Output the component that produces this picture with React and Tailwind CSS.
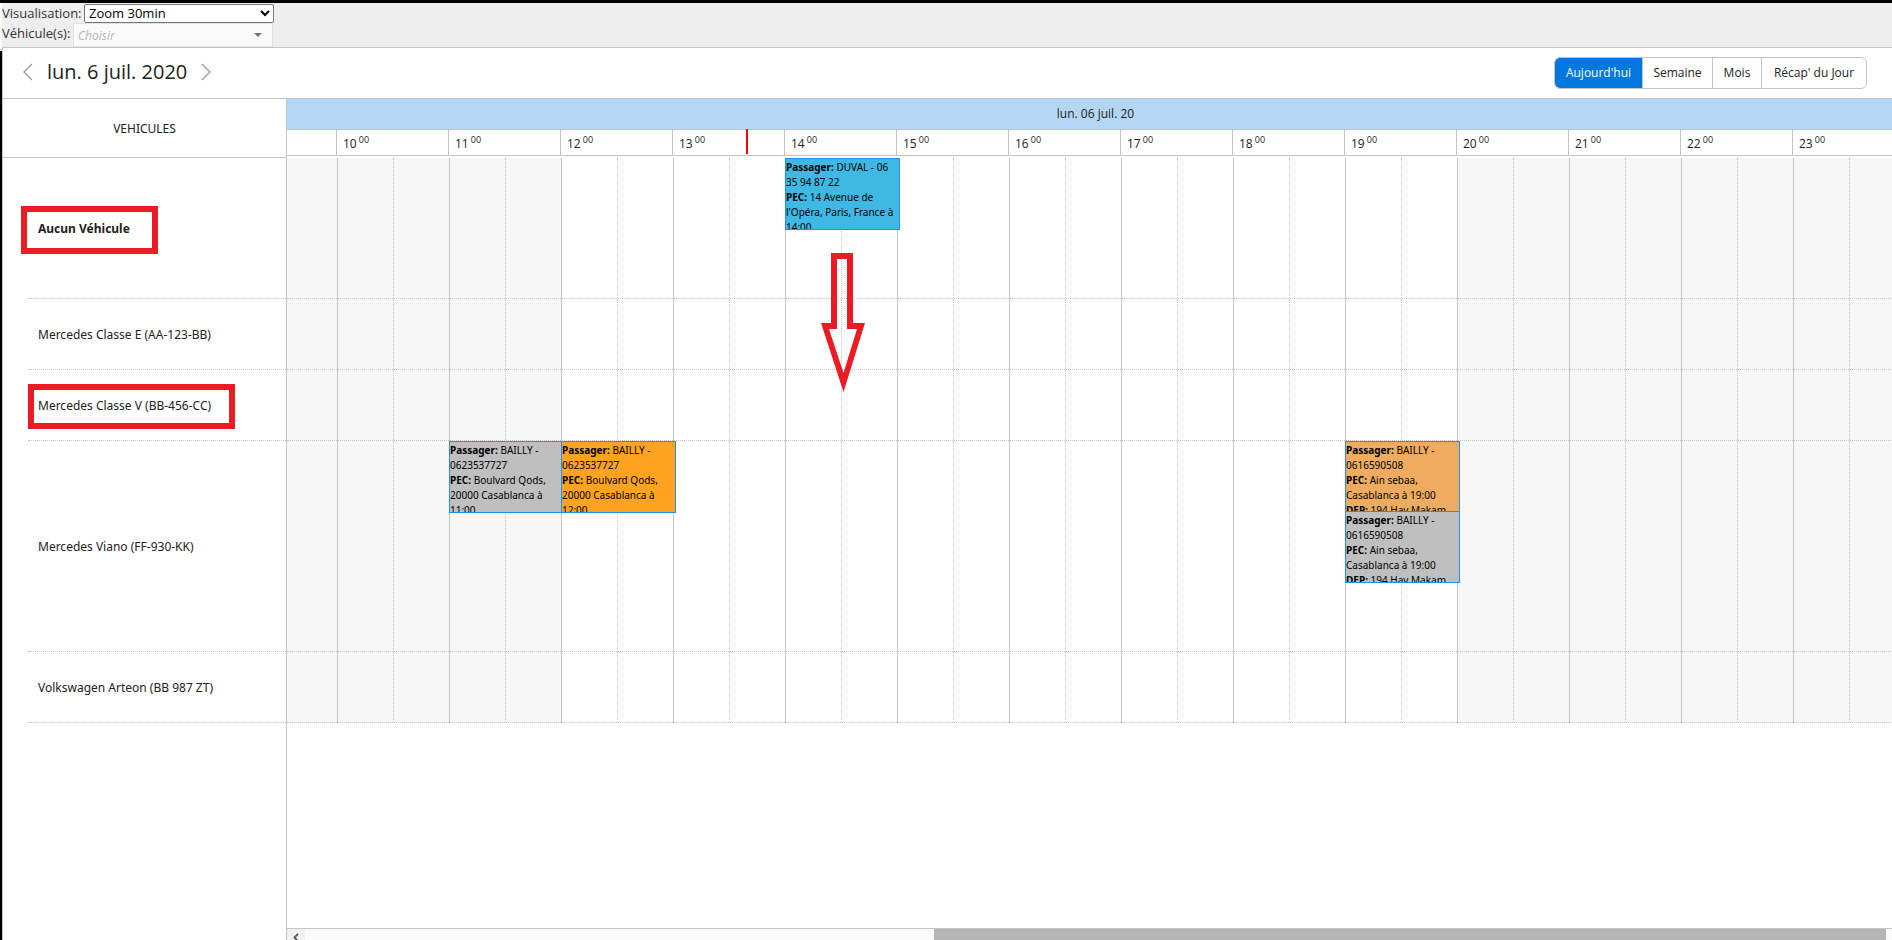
import React from "react";

const HOURS = [10, 11, 12, 13, 14, 15, 16, 17, 18, 19, 20, 21, 22, 23];
const HOUR_WIDTH = 112;
const FIRST_HOUR_X = 50;

const isClosed = (hour) => hour < 12 || hour >= 20;

const VEHICLES = [
  {
    name: "Aucun Véhicule",
    height: "h-[141px]",
    nameClass: "font-bold",
    frame: "left-[18px] top-12 w-[137px] h-12",
    events: [
      {
        hour: 14,
        top: 0,
        color: "bg-[#3fb8e4]",
        passenger: "DUVAL - 06 35 94 87 22",
        pickup: "14 Avenue de l'Opéra, Paris, France à 14:00",
      },
    ],
  },
  { name: "Mercedes Classe E (AA-123-BB)", height: "h-[71px]", events: [] },
  {
    name: "Mercedes Classe V (BB-456-CC)",
    height: "h-[71px]",
    frame: "left-[25px] top-[14px] w-[207px] h-[45px]",
    events: [],
  },
  {
    name: "Mercedes Viano (FF-930-KK)",
    height: "h-[211px]",
    events: [
      {
        hour: 11,
        top: 0,
        color: "bg-[#bfbfbf]",
        passenger: "BAILLY - 0623537727",
        pickup: "Boulvard Qods, 20000 Casablanca à 11:00",
      },
      {
        hour: 12,
        top: 0,
        color: "bg-[#ffa321]",
        passenger: "BAILLY - 0623537727",
        pickup: "Boulvard Qods, 20000 Casablanca à 12:00",
      },
      {
        hour: 19,
        top: 0,
        color: "bg-[#efac5e]",
        passenger: "BAILLY - 0616590508",
        pickup: "Ain sebaa, Casablanca à 19:00",
        dropoff: "194 Hay Makam",
      },
      {
        hour: 19,
        top: 70,
        color: "bg-[#bfbfbf]",
        passenger: "BAILLY - 0616590508",
        pickup: "Ain sebaa, Casablanca à 19:00",
        dropoff: "194 Hay Makam",
      },
    ],
  },
  { name: "Volkswagen Arteon (BB 987 ZT)", height: "h-[71px]", events: [] },
];

function Chevron({ direction }) {
  return (
    <svg width="10" height="18" viewBox="0 0 10 18" fill="none" stroke="#999" strokeWidth="1.2">
      <path d={direction === "left" ? "M9 1L1 9l8 8" : "M1 1l8 8-8 8"} />
    </svg>
  );
}

function Filters() {
  return (
    <div className="ml-0.5 h-11 shrink-0 bg-[#eee] text-[13px] text-[#333]">
      <div className="flex h-5 items-center gap-1">
        <label htmlFor="zoom" className="w-[78px] whitespace-nowrap leading-5">Visualisation:</label>
        <div className="relative">
          <select
            id="zoom"
            className="block h-[19px] w-[190px] appearance-none rounded-xs border border-[#767676] bg-white pl-1 text-[13px] leading-4 text-black"
          >
            <option>Zoom 30min</option>
          </select>
          <svg className="pointer-events-none absolute right-1 top-1.5" width="10" height="7" viewBox="0 0 10 7" fill="none" stroke="#000" strokeWidth="2">
            <path d="M1 1l4 4 4-4" />
          </svg>
        </div>
      </div>
      <div className="flex h-6 items-start">
        <label htmlFor="vehicles" className="w-[71px] whitespace-nowrap leading-5">Véhicule(s):</label>
        <div className="flex h-6 w-[200px] items-center border border-[#e2e2e2] bg-[#fafafa]">
          <input
            id="vehicles"
            placeholder="Choisir"
            className="w-0 flex-1 bg-transparent pl-1 pt-0.5 text-[12px] italic outline-none placeholder:text-[#b5b5b5]"
          />
          <button aria-label="Ouvrir la liste" className="mr-2.5">
            <svg width="8" height="4" viewBox="0 0 8 4" fill="#777">
              <path d="M0 0h8L4 4z" />
            </svg>
          </button>
        </div>
      </div>
    </div>
  );
}

function Toolbar() {
  return (
    <div className="flex h-[51px] shrink-0 items-center justify-between border-b border-[#c4c4c4] pl-5 pr-[25px]">
      <div className="flex items-center gap-3.5 pb-0.5">
        <button aria-label="Jour précédent"><Chevron direction="left" /></button>
        <h1 className="w-[140px] whitespace-nowrap text-center text-[20px] leading-6 text-[#222]">lun. 6 juil. 2020</h1>
        <button aria-label="Jour suivant"><Chevron direction="right" /></button>
      </div>
      <div className="flex h-8 divide-x divide-[#c4c4c4] overflow-hidden rounded-md border border-[#c4c4c4] text-[12px] text-[#222]">
        <button className="w-[88px] bg-[#0078dc] text-white">Aujourd'hui</button>
        <button className="w-[70px]">Semaine</button>
        <button className="w-[49px]">Mois</button>
        <button className="w-[104px] whitespace-nowrap">Récap' du Jour</button>
      </div>
    </div>
  );
}

function Sidebar() {
  return (
    <div className="w-[284px] shrink-0 border-r border-[#c4c4c4] font-['Noto_Sans','Open_Sans',sans-serif] text-[12px] text-[#222]">
      <div className="flex h-[59px] items-center justify-center border-b border-[#c4c4c4] pt-0.5">VEHICULES</div>
      {VEHICLES.map((v) => (
        <div key={v.name} className={`relative pl-[25px] ${v.height}`}>
          <div className={`flex h-full items-center border-b border-dotted border-[#c4c4c4] pl-2.5 pt-0.5 ${v.nameClass ?? ""}`}>
            {v.name}
          </div>
          {v.frame && <div className={`absolute border-6 border-[#ed1c24] ${v.frame}`} />}
        </div>
      ))}
    </div>
  );
}

function Event({ event }) {
  const left = FIRST_HOUR_X + (event.hour - HOURS[0]) * HOUR_WIDTH;
  return (
    <div
      className={`absolute h-[72px] w-[115px] overflow-hidden border border-[#1e90f0] pt-px font-['Noto_Sans','Open_Sans',sans-serif] text-[10px] leading-[15px] text-black ${event.color}`}
      style={{ left, top: event.top }}
    >
      <p><b>Passager:</b> {event.passenger}</p>
      <p><b>PEC:</b> {event.pickup}</p>
      {event.dropoff && <p className="whitespace-nowrap"><b>DEP:</b> {event.dropoff}</p>}
    </div>
  );
}

function MoveArrow() {
  return (
    <svg className="pointer-events-none absolute left-[534px] top-[95px] z-10" width="44" height="140" viewBox="0 0 44 140" fill="#ed1c24" fillRule="evenodd">
      <path d="M10 0H32V70H44L22.500 139L0 70H10ZM16 6V76H8L22.500 120L36 76H26V6Z" />
    </svg>
  );
}

function Timeline() {
  return (
    <div className="flex min-w-0 flex-1 flex-col">
      <div className="flex h-[31px] shrink-0 items-center justify-center border-b border-[#c4c4c4] bg-[#b3d6f5] pl-3 text-[12px] text-[#222]">
        lun. 06 juil. 20
      </div>
      <div className="relative flex h-[26px] shrink-0 border-b border-[#c4c4c4] pl-[49px] text-[12px] text-[#222]">
        {HOURS.map((h) => (
          <div key={h} className="flex w-28 shrink-0 items-start gap-0.5 overflow-hidden border-l border-[#c4c4c4] pl-1.5 last-of-type:shrink">
            <span className="leading-7">{h}</span>
            <span className="text-[9px] leading-5">00</span>
          </div>
        ))}
        <div className="absolute -top-px left-[459px] h-[25px] w-0.5 bg-[#ff0000]" />
      </div>
      <div className="relative mt-0.5 min-h-0 flex-1 overflow-hidden">
        {VEHICLES.map((v) => (
          <div key={v.name} className={`relative flex ${v.height}`}>
            <div className="w-[50px] shrink-0 border-b border-dotted border-b-[#c4c4c4] bg-[#f7f7f7]" />
            {HOURS.map((h) => (
              <div
                key={h}
                className={`flex w-28 shrink-0 border-b border-l border-[#c4c4c4] [border-bottom-style:dotted] ${isClosed(h) ? "bg-[#f7f7f7]" : "bg-white"}`}
              >
                <div className="ml-[55px] border-l border-dotted border-[#c4c4c4]" />
              </div>
            ))}
            {v.events.map((e) => (
              <Event key={`${e.hour}-${e.top}`} event={e} />
            ))}
          </div>
        ))}
        <MoveArrow />
      </div>
      <div className="flex h-3 shrink-0 items-start overflow-hidden border-t border-[#c4c4c4] bg-[#fafafa] pr-1.5">
        <button aria-label="Défiler vers la gauche" className="flex h-[17px] w-[18px] shrink-0 items-center justify-center bg-[#f1f1f1]">
          <svg width="6" height="9" viewBox="0 0 6 9" fill="none" stroke="#505050" strokeWidth="1.8">
            <path d="M5 .8L1.500 4.500L5 8.200" />
          </svg>
        </button>
        <div className="grow-[629]" />
        <div className="h-[17px] grow-[952] bg-[#b5b5b5]" />
      </div>
    </div>
  );
}

export default function App() {
  return (
    <div className="flex h-screen flex-col overflow-hidden border-t-3 border-black bg-white font-['Open_Sans','Noto_Sans',sans-serif]">
      <Filters />
      <div className="flex min-h-0 flex-1">
        <div className="flex w-0.5 shrink-0 flex-col pt-0.5">
          <div className="h-0.5 bg-[#d8d8d8]" />
          <div className="flex-1 bg-black" />
        </div>
        <div className="flex min-w-0 flex-1 flex-col border-l border-t border-[#c4c4c4]">
          <Toolbar />
          <div className="flex min-h-0 flex-1">
            <Sidebar />
            <Timeline />
          </div>
        </div>
      </div>
    </div>
  );
}
